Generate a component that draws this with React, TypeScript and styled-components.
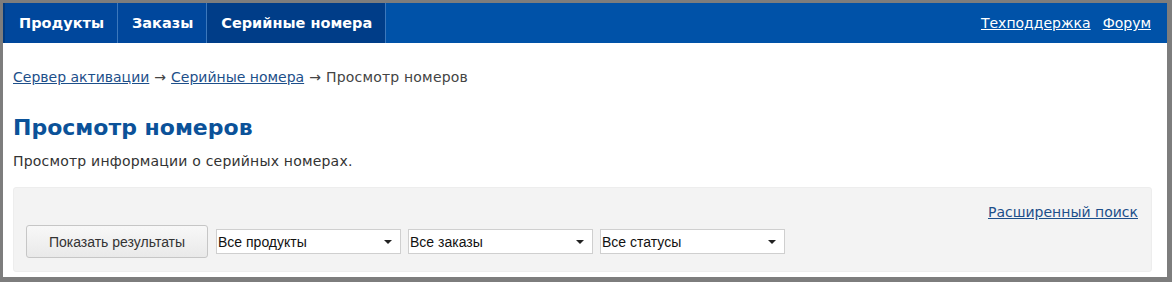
import React from 'react'
import styled, { createGlobalStyle } from 'styled-components'

const GlobalStyle = createGlobalStyle`
    html, body {
        margin: 0;
        padding: 0;
        background: #808080;
    }
    body {
        font-family: 'DejaVu Sans', Tahoma, sans-serif;
        color: #333;
    }
`

const navItems = [
    { label: 'Продукты', active: false },
    { label: 'Заказы', active: false },
    { label: 'Серийные номера', active: true },
]

const selects = ['Все продукты', 'Все заказы', 'Все статусы']

const App: React.FC = () => {
    return (
        <>
            <GlobalStyle />
            <Frame>
                <TopBar>
                    <Nav>
                        {navItems.map((item) => (
                            <NavItem key={item.label} $active={item.active}>
                                {item.label}
                            </NavItem>
                        ))}
                    </Nav>
                    <TopLinks>
                        <TopLink href="#">Техподдержка</TopLink>
                        <TopLink href="#">Форум</TopLink>
                    </TopLinks>
                </TopBar>
                <Content>
                    <Breadcrumbs>
                        <Crumb href="#">Сервер активации</Crumb>
                        <Arrow>→</Arrow>
                        <Crumb href="#">Серийные номера</Crumb>
                        <Arrow>→</Arrow>
                        <Current>Просмотр номеров</Current>
                    </Breadcrumbs>
                    <Title>Просмотр номеров</Title>
                    <Description>Просмотр информации о серийных номерах.</Description>
                    <FilterPanel>
                        <AdvancedRow>
                            <Crumb href="#">Расширенный поиск</Crumb>
                        </AdvancedRow>
                        <FilterRow>
                            <ShowButton>Показать результаты</ShowButton>
                            {selects.map((s) => (
                                <SelectBox key={s}>
                                    <span>{s}</span>
                                    <Caret />
                                </SelectBox>
                            ))}
                        </FilterRow>
                    </FilterPanel>
                </Content>
            </Frame>
        </>
    )
}

export default App

const Frame = styled.div`
    box-sizing: border-box;
    height: 282px;
    border-style: solid;
    border-color: #7d7d7d;
    border-width: 3px 5px 5px 3px;
    background: #fff;
    overflow: hidden;
`

const TopBar = styled.div`
    display: flex;
    justify-content: space-between;
    align-items: center;
    height: 40px;
    background: #0052a8;
    border-left: 2px solid #003a80;
`

const Nav = styled.div`
    display: flex;
    height: 100%;
`

const NavItem = styled.div<{ $active: boolean }>`
    display: flex;
    align-items: center;
    padding: 0 13px 0 14px;
    height: 100%;
    background: ${(p) => (p.$active ? '#003d88' : '#00479c')};
    border-right: 1px solid #3c78bc;
    color: #fff;
    font-weight: bold;
    font-size: 14.5px;
`

const TopLinks = styled.div`
    display: flex;
    gap: 12px;
    padding-right: 16px;
`

const TopLink = styled.a`
    color: #fff;
    font-size: 14px;
`

const Content = styled.div`
    padding: 0 15px 0 10px;
`

const Breadcrumbs = styled.div`
    margin-top: 26px;
    font-size: 14px;
    color: #444;
    line-height: 17px;
`

const Crumb = styled.a`
    color: #1d4f8a;
    font-size: 14px;
`

const Arrow = styled.span`
    margin: 0 5px;
`

const Current = styled.span`
    letter-spacing: 0.2px;
`

const Title = styled.h1`
    margin: 27px 0 0;
    font-size: 22px;
    line-height: 30px;
    color: #0b5299;
    font-weight: bold;
`

const Description = styled.p`
    margin: 10px 0 0;
    font-size: 14px;
    line-height: 17px;
    color: #333;
    letter-spacing: 0.2px;
`

const FilterPanel = styled.div`
    margin-top: 17px;
    height: 85px;
    box-sizing: border-box;
    background: #f3f3f3;
    border: 1px solid #ededed;
    border-radius: 3px;
    padding: 16px 13px 0 12px;
`

const AdvancedRow = styled.div`
    display: flex;
    justify-content: flex-end;
    line-height: 17px;
`

const FilterRow = styled.div`
    display: flex;
    align-items: center;
    gap: 7px;
    margin-top: 4px;
`

const ShowButton = styled.button`
    height: 33px;
    width: 182px;
    font-family: 'Liberation Sans', Arial, sans-serif;
    font-size: 14px;
    color: #333;
    background: linear-gradient(#f8f8f8, #e9e9e9);
    border: 1px solid #c6c6c6;
    border-radius: 3px;
    padding: 0;
    margin-right: 1px;
`

const SelectBox = styled.div`
    box-sizing: border-box;
    width: 185px;
    height: 25px;
    display: flex;
    align-items: center;
    justify-content: space-between;
    padding: 0 8px 0 1px;
    background: #fff;
    border: 1px solid #cfcfcf;
    font-family: 'Liberation Sans', Arial, sans-serif;
    font-size: 14px;
    color: #111;
`

const Caret = styled.span`
    width: 0;
    height: 0;
    border-left: 4px solid transparent;
    border-right: 4px solid transparent;
    border-top: 4px solid #222;
`
